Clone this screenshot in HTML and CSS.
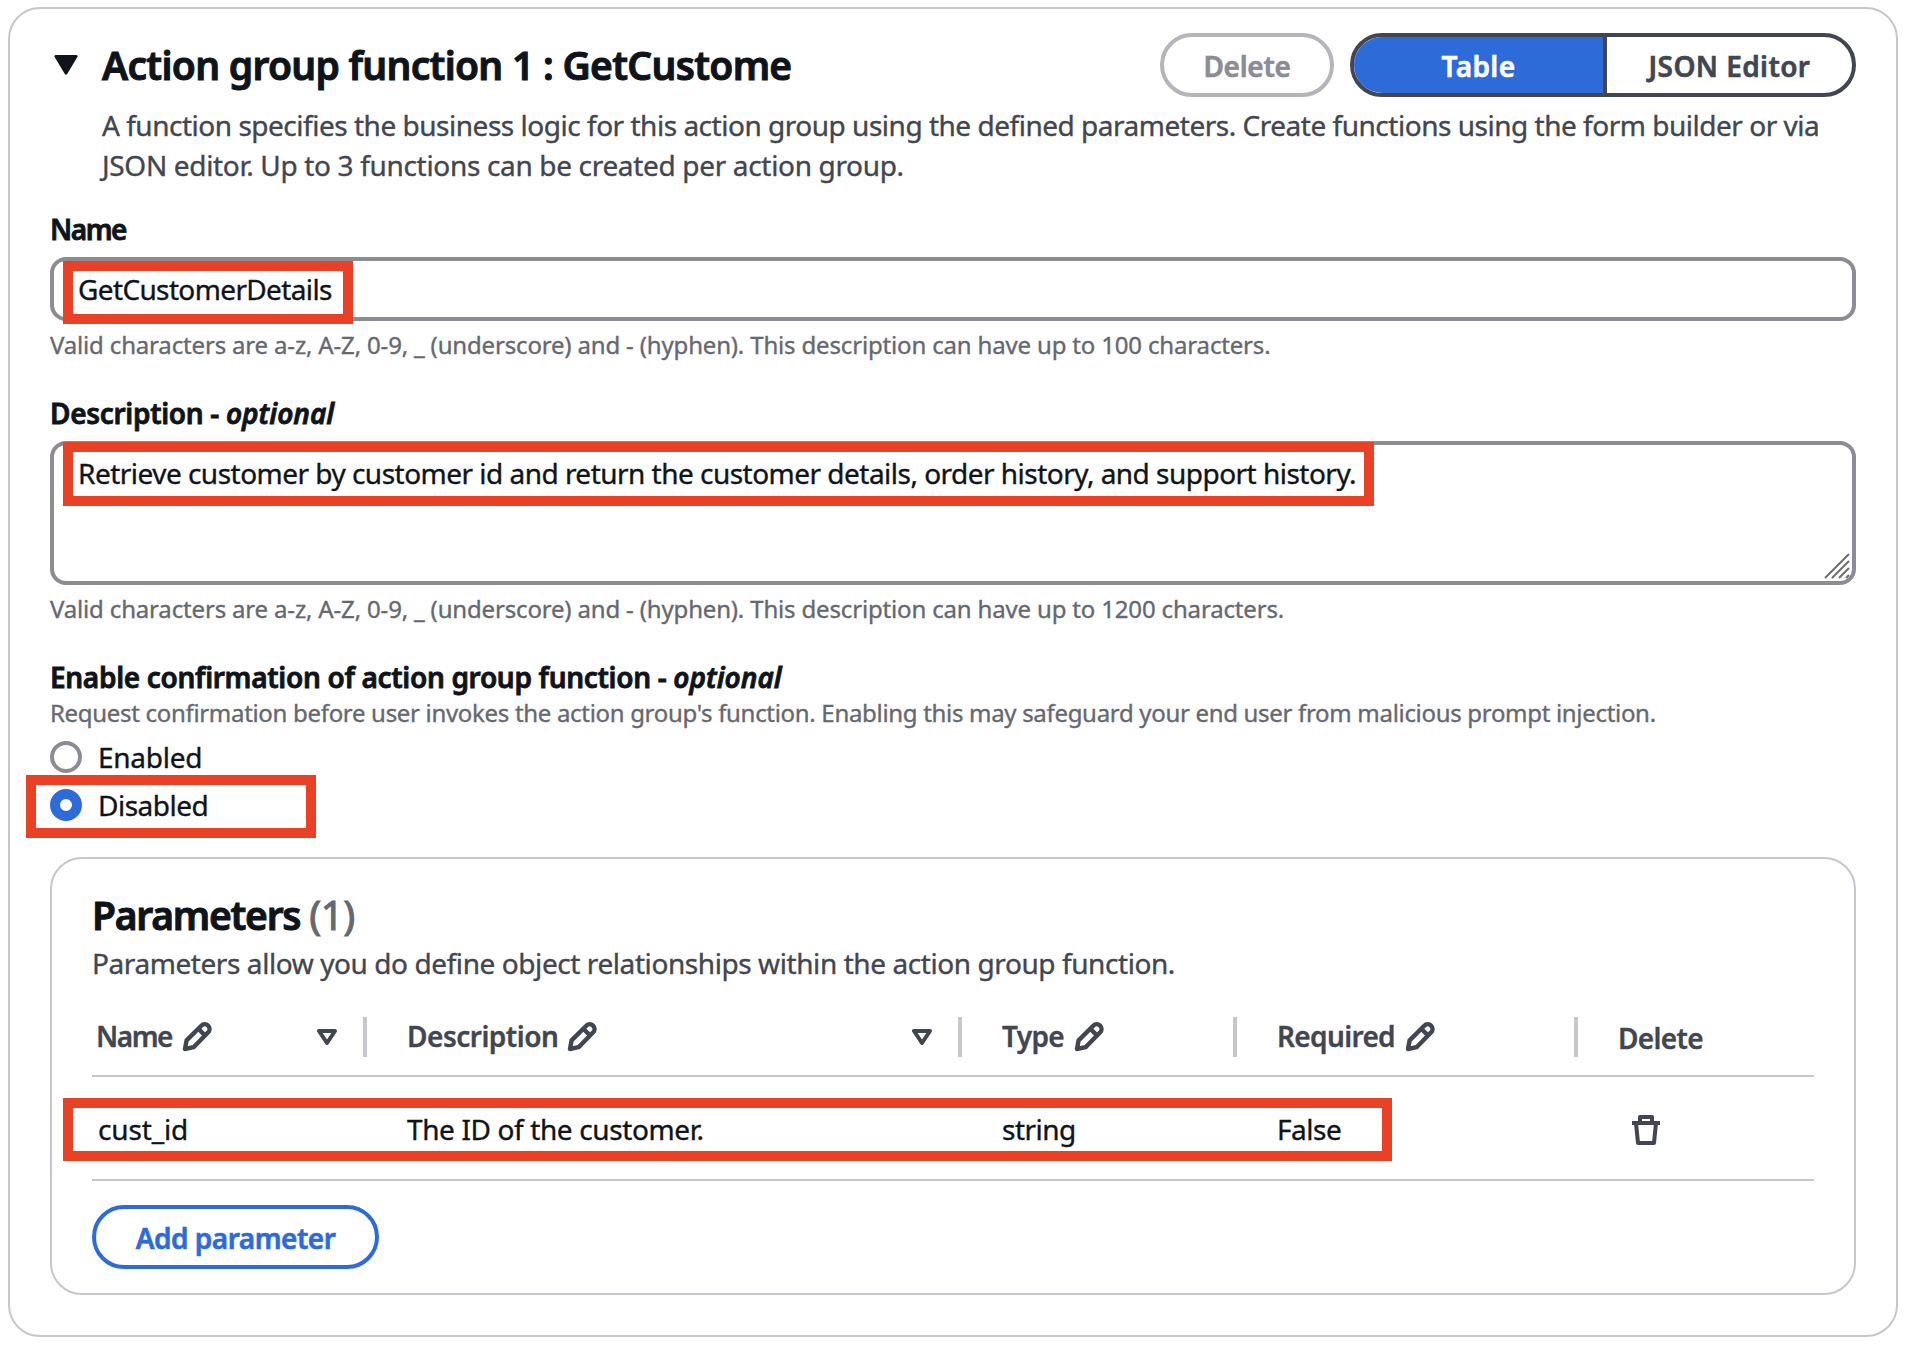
FILE: index.html
```html
<!DOCTYPE html>
<html lang="en">
<head>
<meta charset="utf-8">
<title>Action group function</title>
<link rel="stylesheet" href="styles.css">
</head>
<body>
<svg class="defs" width="0" height="0">
  <symbol id="pencil" viewBox="0 0 30 30">
    <path d="M3 27l1.600-8.600L19.300 3.700a4.650 4.650 0 0 1 6.900 6.600L11.600 25.200 3 27ZM16.300 6.700l6.900 6.900" fill="none" stroke="currentColor" stroke-width="4.400" stroke-linejoin="round"/>
  </symbol>
  <symbol id="sort" viewBox="0 0 20 16">
    <path d="M2 2h16L10 14Z" fill="none" stroke="currentColor" stroke-width="4" stroke-linejoin="round"/>
  </symbol>
</svg>

<main class="card">
  <header class="card-header">
    <svg class="caret" viewBox="0 0 24 20"><path d="M1.500 0h21q1.500 .3 1 1.800L13.200 19q-1.200 1.500-2.400 0L.5 1.800Q0 .3 1.500 0Z" fill="currentColor"/></svg>
    <h1 class="title">Action group function 1 : GetCustome</h1>
    <button class="btn btn-disabled" disabled>Delete</button>
    <div class="segmented">
      <button class="segment segment-active">Table</button>
      <button class="segment segment-json">JSON Editor</button>
    </div>
  </header>
  <p class="intro"><span class="intro-a">A function specifies the business logic for this action group using the defined parameters. Create functions using the form builder or via</span><br>JSON editor. Up to 3 functions can be created per action group.</p>

  <section class="field">
    <div class="label label-name">Name</div>
    <div class="input"><span class="input-name">GetCustomerDetails</span><i class="mark mark-name"></i></div>
    <p class="hint">Valid characters are a-z, A-Z, 0-9, _ (underscore) and - (hyphen). This description can have up to 100 characters.</p>
  </section>

  <section class="field">
    <div class="label">Description - <em>optional</em></div>
    <div class="input textarea"><span>Retrieve customer by customer id and return the customer details, order history, and support history.</span>
      <i class="mark mark-description"></i>
      <svg class="grip" viewBox="0 0 26 26"><path d="M1 25 25 1M8 25 25 8M15 25 25 15M22 25l3-3" fill="none" stroke="#6f6f6f" stroke-width="2"/></svg>
    </div>
    <p class="hint">Valid characters are a-z, A-Z, 0-9, _ (underscore) and - (hyphen). This description can have up to 1200 characters.</p>
  </section>

  <section class="field">
    <div class="label">Enable confirmation of action group function - <em>optional</em></div>
    <p class="hint hint-top">Request confirmation before user invokes the action group's function. Enabling this may safeguard your end user from malicious prompt injection.</p>
    <div class="radios">
      <div class="radio"><span class="dot"></span>Enabled</div>
      <div class="radio radio-on"><span class="dot"></span>Disabled<i class="mark mark-disabled"></i></div>
    </div>
  </section>

  <section class="params">
    <h2 class="title params-title">Parameters <span>(1)</span></h2>
    <p class="params-text">Parameters allow you do define object relationships within the action group function.</p>
    <div class="row head">
      <div class="cell"><span class="h-name">Name</span><svg class="pencil"><use href="#pencil"/></svg><svg class="sort"><use href="#sort"/></svg></div>
      <div class="cell"><span class="h-desc">Description</span><svg class="pencil"><use href="#pencil"/></svg><svg class="sort"><use href="#sort"/></svg></div>
      <div class="cell"><span>Type</span><svg class="pencil"><use href="#pencil"/></svg></div>
      <div class="cell"><span>Required</span><svg class="pencil"><use href="#pencil"/></svg></div>
      <div class="cell"><span class="h-delete">Delete</span></div>
    </div>
    <div class="row body">
      <div class="cell">cust_id</div>
      <div class="cell cell-desc">The ID of the customer.</div>
      <div class="cell cell-type">string</div>
      <div class="cell cell-required">False</div>
      <div class="cell cell-delete"><svg class="trash" viewBox="0 0 28 30"><path d="M0 8h28M8 8V2h12v6M4 8l2 20h16l2-20" fill="none" stroke="currentColor" stroke-width="4" stroke-linejoin="round"/></svg></div>
      <i class="mark mark-row"></i>
    </div>
    <button class="btn btn-add">Add parameter</button>
  </section>
</main>
</body>
</html>
```
FILE: styles.css
```css
* { box-sizing: border-box; margin: 0; }
body {
  padding: 7px 12px 0 8px;
  background: #fff;
  color: #0f141a;
  font: 400 28px/40px "Noto Sans", "Open Sans", sans-serif;
  letter-spacing: -.5px;
  -webkit-text-stroke: .35px;
}
button { font: inherit; background: none; padding: 0; -webkit-text-stroke: .6px; }
svg { display: block; flex: none; }
.defs { position: absolute; }

.card {
  height: 1330px;
  padding: 24px 40px;
  border: 2px solid #c6c6cd;
  border-radius: 32px;
}
.card-header { display: flex; align-items: center; height: 64px; }
.caret { width: 24px; height: 20px; margin: 0 24px 0 4px; }
.title { font-size: 39px; font-weight: 600; line-height: 48px; letter-spacing: -.71px; white-space: nowrap; -webkit-text-stroke: 1px; }
.card-header .title { margin-right: auto; }
.btn {
  height: 64px;
  padding-top: 2px;
  border: 4px solid;
  border-radius: 32px;
  font-weight: 600;
  letter-spacing: -.3px;
}
.btn-disabled { width: 174px; margin-right: 16px; border-color: #b4b4bb; color: #8c8c94; }
.segmented {
  display: flex;
  width: 506px;
  height: 64px;
  border: 4px solid #424650;
  border-radius: 32px;
  overflow: hidden;
}
.segment { flex: 1; padding-top: 2px; border: 0; color: #424650; font-weight: 600; letter-spacing: .4px; }
.segment-active { flex: 0 0 253px; border-right: 4px solid #424650; background: #2d6bd9; color: #fff; }

.intro { margin: 8px 0 0 52px; color: #424650; letter-spacing: -.33px; white-space: nowrap; }
.intro-a { letter-spacing: -.483px; }

.field { margin-top: 32px; }
.intro + .field { margin-top: 24px; }
.label { font-weight: 600; letter-spacing: -.31px; -webkit-text-stroke: .8px; }
.label em { letter-spacing: 0; }
.label-name { letter-spacing: -1.45px; }
.input {
  position: relative;
  height: 64px;
  margin-top: 8px;
  padding: 8px 24px;
  border: 4px solid #8c8c94;
  border-radius: 16px;
  letter-spacing: -.52px;
}
.input-name { letter-spacing: -.634px; }
.textarea { height: 144px; }
.grip { position: absolute; right: 2px; bottom: 2px; width: 26px; height: 26px; }
.hint { margin-top: 8px; color: #656871; font-size: 24px; line-height: 32px; letter-spacing: -.165px; white-space: nowrap; }
.hint-top { margin-top: 0; letter-spacing: -.312px; }

.radios { display: grid; gap: 8px; margin-top: 8px; }
.radio { position: relative; display: flex; align-items: center; gap: 16px; letter-spacing: -.25px; }
.radio-on { letter-spacing: -.5px; }
.dot { width: 32px; height: 32px; border: 4px solid #8c8c94; border-radius: 50%; }
.radio-on .dot { border: 10px solid #2d6bd9; }

/* Red callouts drawn over the form */
.mark { position: absolute; border: 10px solid #ea4126; }
.mark-name { left: 9px; top: 0; width: 290px; height: 63px; }
.mark-description { left: 9px; top: -3px; width: 1311px; height: 64px; }
.mark-disabled { left: -24px; top: -10px; width: 290px; height: 63px; }
.mark-row { left: -29px; top: 21px; width: 1329px; height: 63px; }

.params { height: 438px; margin-top: 32px; padding: 32px 40px 24px; border: 2px solid #c6c6cd; border-radius: 32px; }
.params-title { letter-spacing: -1.25px; }
.params-title span { color: #656871; font-size: 40px; font-weight: 400; letter-spacing: -.44px; }
.params-text { margin-top: 4px; color: #424650; letter-spacing: -.42px; }
.row { position: relative; display: grid; grid-template-columns: 275px 595px 275px 341px 1fr; border-bottom: 2px solid #c6c6cd; }
.head { margin-top: 16px; padding: 18px 0; color: #424650; font-weight: 600; letter-spacing: -.65px; }
.cell { display: flex; align-items: center; height: 40px; padding-left: 40px; }
.head .cell:not(:last-child) { border-right: 4px solid #c6c6cd; }
.head .cell:first-child { padding-left: 4px; }
.head .cell span { padding-bottom: 2px; }
.h-name { letter-spacing: -1.45px; }
.h-desc { letter-spacing: -.5px; }
.head .cell .h-delete { padding: 2px 0 0; }
.pencil { width: 30px; height: 30px; margin-left: 10px; }
.h-desc + .pencil { margin-left: 9px; }
.sort { width: 20px; height: 16px; margin: 0 26px 0 auto; }
.body { height: 104px; padding-top: 32px; }
.body .cell:first-child { padding-left: 6px; letter-spacing: -.15px; }
.cell-desc { letter-spacing: -.38px; }
.cell-required { letter-spacing: -.469px; }
.cell-delete { padding-left: 54px; color: #424650; }
.trash { width: 28px; height: 30px; margin-top: 2px; }
.btn-add { width: 287px; margin-top: 24px; border-color: #2d6bd9; color: #2d6bd9; letter-spacing: -.5px; }
```
